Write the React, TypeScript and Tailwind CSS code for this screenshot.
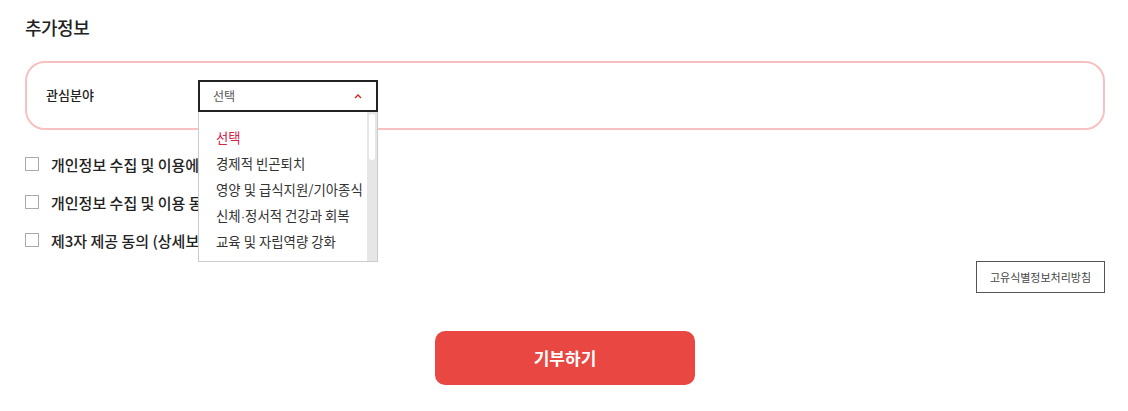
import { useState } from "react";

const options = [
  "선택",
  "경제적 빈곤퇴치",
  "영양 및 급식지원/기아종식",
  "신체·정서적 건강과 회복",
  "교육 및 자립역량 강화",
];

const agreements = [
  "개인정보 수집 및 이용에 동의합니다. (상세보기)",
  "개인정보 수집 및 이용 동의 (상세보기)",
  "제3자 제공 동의 (상세보기)",
];

// the list font draws "·" full width; set it in a Latin face to keep it narrow
function OptionText({ text }: { text: string }) {
  const parts = text.split("·");
  if (parts.length === 1) return <>{text}</>;
  return (
    <>
      {parts[0]}
      <span style={{ fontFamily: '"Liberation Sans", sans-serif' }}>·</span>
      {parts[1]}
    </>
  );
}

export default function App() {
  const [selected] = useState(0);

  return (
    <div
      className="w-[1128px] h-[411px] bg-white pl-[25px] pr-[23px] pt-[14px] text-[#222]"
      style={{ fontFamily: '"Noto Sans CJK KR", "Noto Sans", sans-serif' }}
    >
      <h2 className="text-[18px] font-medium leading-[26px] tracking-[-0.5px]">추가정보</h2>

      <div className="mt-[21px] h-[69px] rounded-[20px] border-2 border-[#f7c1c1] flex items-center px-[19px]">
        <span className="w-[152px] text-[13px] font-medium leading-none -mt-[2px]">관심분야</span>
        <div className="relative mt-[1px]">
          <div className="w-[180px] h-[32px] border-2 border-[#222] flex items-center justify-between pl-[13px] pr-[13px]">
            <span className="text-[12px] text-[#555]">선택</span>
            <svg width="8" height="5" viewBox="0 0 8 5" className="mr-[1px]">
              <path d="M1 4 L4 1 L7 4" fill="none" stroke="#d22" strokeWidth="1.4" />
            </svg>
          </div>
          <div className="absolute left-0 top-full z-10 w-[180px] h-[150px] bg-white border border-t-0 border-[#ccc] flex">
            <ul className="flex-1 pt-[12px] pl-[17px]">
              {options.map((o, i) => (
                <li
                  key={o}
                  className={`h-[26px] leading-[26px] text-[13.4px] whitespace-nowrap ${
                    i === selected ? "text-[#d4264a]" : "text-[#333]"
                  }`}
                >
                  <OptionText text={o} />
                </li>
              ))}
            </ul>
            <div className="w-[10px] h-full bg-[#e6e6e6] px-[2px] pt-[2px]">
              <div className="h-[46px] rounded-[3px] bg-white" />
            </div>
          </div>
        </div>
      </div>

      <div className="mt-[27px] flex flex-col gap-[24px]">
        {agreements.map((a) => (
          <label key={a} className="flex items-center h-[14px]">
            <span className="w-[14px] h-[14px] border border-[#aaa] bg-white" />
            <span className="ml-[12px] text-[15px] font-medium leading-none whitespace-nowrap">{a}</span>
          </label>
        ))}
      </div>

      <div className="mt-[14px] flex justify-end">
        <button className="w-[129px] h-[32px] border border-[#555] text-[11px] text-[#444] bg-white">
          고유식별정보처리방침
        </button>
      </div>

      <div className="mt-[38px] flex justify-center">
        <button className="w-[260px] h-[54px] rounded-[10px] bg-[#e84841] text-white text-[17px] font-bold">
          기부하기
        </button>
      </div>
    </div>
  );
}
